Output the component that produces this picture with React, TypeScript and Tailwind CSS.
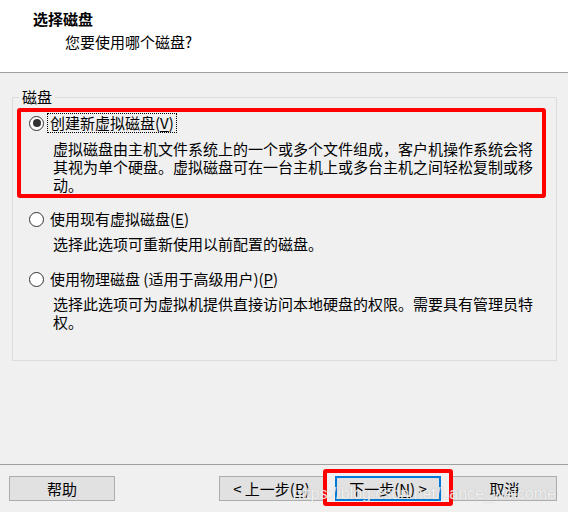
import React from "react";

function Radio({ checked }: { checked?: boolean }) {
  return (
    <span className="flex h-[15px] w-[15px] shrink-0 items-center justify-center rounded-full border border-[#333333] bg-white">
      {checked && <span className="h-[8px] w-[8px] rounded-full bg-[#333333]" />}
    </span>
  );
}

function Key({ k }: { k: string }) {
  return <span className="underline underline-offset-2">{k}</span>;
}

function Button({
  children,
  primary,
  className = "",
}: {
  children: React.ReactNode;
  primary?: boolean;
  className?: string;
}) {
  return (
    <button
      className={
        "flex h-[25px] items-center justify-center bg-[#e1e1e1] leading-[18px] text-black " +
        (primary ? "border-2 border-[#0078d7] " : "border border-[#adadad] ") +
        className
      }
    >
      {children}
    </button>
  );
}

export default function App() {
  return (
    <div className="flex h-[512px] w-[568px] flex-col overflow-hidden bg-[#f0f0f0] font-['Noto_Sans_CJK_SC','Noto_Sans',sans-serif] text-[15px] leading-[18px] text-black">
      {/* header */}
      <div className="h-[72px] shrink-0 border-b border-[#a0a0a0] bg-white box-content">
        <div className="pl-[33px] pt-[10px] font-bold">选择磁盘</div>
        <div className="mt-[5px] pl-[65px]">您要使用哪个磁盘?</div>
      </div>

      {/* body */}
      <div className="flex-1">
        <fieldset className="ml-[12px] mr-[11px] mt-[15px] border border-[#dcdcdc] pb-[29px]">
          <legend className="ml-[6px] px-[3px] leading-[18px]">磁盘</legend>

          <div className="ml-[4px] mr-[10px] mt-[2px] rounded-[3px] border-4 border-[#ff0000]">
            <div className="mt-[1px] flex h-[20px] items-center pl-[8px]">
              <Radio checked />
              <span className="ml-[3px] border border-dotted border-black px-[2px] leading-[18px]">
                创建新虚拟磁盘(<Key k="V" />)
              </span>
            </div>
            <p className="mt-[7px] pl-[32px]">
              虚拟磁盘由主机文件系统上的一个或多个文件组成，客户机操作系统会将
              <br />
              其视为单个硬盘。虚拟磁盘可在一台主机上或多台主机之间轻松复制或移
              <br />
              动。
            </p>
          </div>

          <div className="mt-[11px] flex h-[20px] items-center pl-[16px]">
            <Radio />
            <span className="ml-[3px] border border-transparent px-[2px] leading-[18px]">
              使用现有虚拟磁盘(<Key k="E" />)
            </span>
          </div>
          <p className="mt-[6px] pl-[40px]">选择此选项可重新使用以前配置的磁盘。</p>

          <div className="mt-[16px] flex h-[20px] items-center pl-[16px]">
            <Radio />
            <span className="ml-[3px] border border-transparent px-[2px] leading-[18px]">
              使用物理磁盘 (适用于高级用户)(<Key k="P" />)
            </span>
          </div>
          <p className="mt-[6px] pl-[40px]">
            选择此选项可为虚拟机提供直接访问本地硬盘的权限。需要具有管理员特
            <br />
            权。
          </p>
        </fieldset>
      </div>

      {/* footer */}
      <div className="relative h-[48px] shrink-0 border-t border-[#a0a0a0] pt-[11px]">
        <div className="flex">
          <Button className="ml-[9px] w-[106px]">帮助</Button>
          <Button className="ml-auto w-[105px]">
            &lt; 上一步(<Key k="B" />)
          </Button>
          <Button primary className="ml-[11px] w-[106px]">
            下一步(<Key k="N" />) &gt;
          </Button>
          <Button className="ml-[11px] mr-[11px] w-[105px]">取消</Button>
        </div>

        <div className="pointer-events-none absolute left-[323px] top-[4px] h-[37px] w-[130px] rounded-[3px] border-4 border-[#ff0000]" />

        <div className="pointer-events-none absolute right-[12px] top-[19px] font-['Liberation_Sans',sans-serif] text-[16px] leading-[20px] text-white/80 [text-shadow:0_0_1px_rgba(120,120,120,0.5)]">
          https://blog.csdn.net/Lance_welcome
        </div>
      </div>
    </div>
  );
}
